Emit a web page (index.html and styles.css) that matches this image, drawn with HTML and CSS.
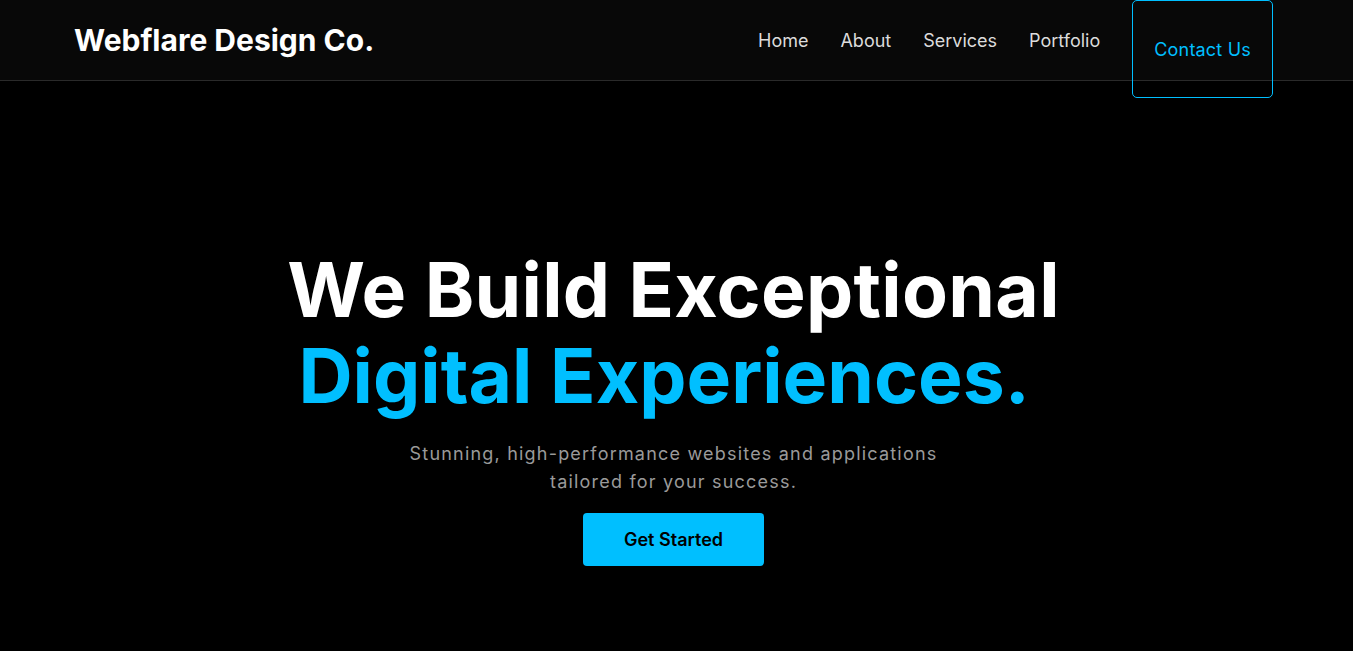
FILE: index.html
```html
<!DOCTYPE html>
<html lang="en">
<head>
<meta charset="utf-8">
<title>Webflare Design Co.</title>
<link rel="stylesheet" href="styles.css">
</head>
<body>
<header class="site-header">
  <a class="logo" href="#">Webflare Design Co.</a>
  <nav class="main-nav">
    <ul class="nav-list">
      <li class="nav-item"><a class="nav-link" href="#">Home</a></li>
      <li class="nav-item"><a class="nav-link" href="#">About</a></li>
      <li class="nav-item"><a class="nav-link" href="#">Services</a></li>
      <li class="nav-item"><a class="nav-link" href="#">Portfolio</a></li>
      <li class="nav-item nav-item-cta"><a class="nav-cta" href="#">Contact Us</a></li>
    </ul>
  </nav>
</header>
<main>
  <section class="hero">
    <div class="hero-content">
      <h1 class="hero-title">We Build Exceptional<br><span class="accent">Digital Experiences.</span></h1>
      <p class="hero-sub">Stunning, high-performance websites and applications tailored for your success.</p>
      <a class="btn-primary" href="#">Get Started</a>
    </div>
  </section>
</main>
</body>
</html>
```
FILE: styles.css
```css
* { box-sizing: border-box; }
html, body { margin: 0; padding: 0; }
body {
  background: #000;
  color: #fff;
  font-family: "Inter", "Open Sans", sans-serif;
}
a { text-decoration: none; }

.site-header {
  height: 81px;
  display: flex;
  align-items: center;
  justify-content: space-between;
  padding: 0 80px 0 74px;
  background: #080808;
  border-bottom: 1px solid #2a2a2a;
}
.logo {
  color: #fff;
  font-weight: 700;
  font-size: 30px;
}
.main-nav { align-self: stretch; }
.nav-list {
  list-style: none;
  margin: 0;
  padding: 0;
  height: 100%;
  display: flex;
  align-items: center;
  gap: 32px;
}
.nav-link {
  color: #dcdcdc;
  font-size: 18px;
}
.nav-item-cta { align-self: flex-start; }
.nav-cta {
  display: flex;
  align-items: center;
  height: 98px;
  padding: 0 21px;
  color: #00bfff;
  font-size: 18px;
  letter-spacing: 0.2px;
  border: 1px solid #00bfff;
  border-radius: 5px;
}

.hero {
  min-height: 100vh;
  display: flex;
  align-items: center;
  justify-content: center;
  padding-right: 6px;
  text-align: center;
}
.hero-content {
  display: flex;
  flex-direction: column;
  align-items: center;
}
.hero-title {
  margin: 0;
  font-size: 75px;
  font-weight: 700;
  line-height: 1.152;
  letter-spacing: 0.3px;
  color: #fff;
}
.accent {
  color: #00bfff;
  padding-right: 0.25em;
  letter-spacing: 0;
}
.hero-sub {
  margin: 20px 0 16px;
  max-width: 560px;
  font-size: 18px;
  letter-spacing: 1.2px;
  line-height: 1.6;
  color: #9a9a9a;
}
.btn-primary {
  display: inline-block;
  padding: 15px 41px;
  line-height: 23px;
  background: #00bfff;
  color: #000;
  font-weight: 600;
  font-size: 18px;
  border-radius: 4px;
}
```
